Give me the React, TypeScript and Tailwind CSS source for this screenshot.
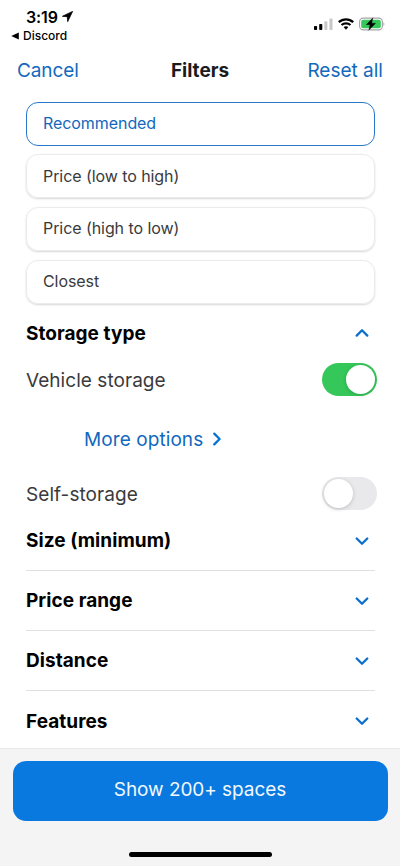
import React, { useState } from "react";

type ChevronProps = { direction: "up" | "down" | "right" };

function Chevron({ direction }: ChevronProps) {
  if (direction === "right") {
    return (
      <svg width="10" height="14" viewBox="0 0 10 14" fill="none">
        <path d="M2.3 1.6L7.6 7L2.3 12.4" stroke="#0873d6" strokeWidth="2.3" strokeLinecap="round" strokeLinejoin="round" />
      </svg>
    );
  }
  return (
    <svg width="14" height="10" viewBox="0 0 14 10" fill="none">
      <path
        d={direction === "up" ? "M1.7 7.6L7 2.3L12.3 7.6" : "M1.7 2.5L7 7.8L12.3 2.5"}
        stroke="#0b6fce"
        strokeWidth="2.3"
        strokeLinecap="round"
        strokeLinejoin="round"
      />
    </svg>
  );
}

function StatusBar() {
  return (
    <div className="flex h-[48px] justify-between pl-[11px] pr-[15px] text-black">
      <div className="flex flex-col pt-[8px]">
        <div className="flex items-center gap-[4px] pl-[15px]">
          <span className="text-[16px] leading-[18px] font-semibold tracking-[-0.1px]">3:19</span>
          <svg width="11" height="11" viewBox="0 0 11 11" className="-mt-[2px]">
            <path d="M10.6 0.4L0.4 5.3L5.3 5.7L5.7 10.6Z" fill="#000" stroke="#000" strokeWidth="0.8" strokeLinejoin="round" />
          </svg>
        </div>
        <div className="mt-[3px] flex items-center gap-[4px]">
          <svg width="8" height="8" viewBox="0 0 8 8">
            <path d="M0.3 4L7.8 0.4V7.6Z" fill="#000" />
          </svg>
          <span className="text-[12px] leading-[14px] font-medium">Discord</span>
        </div>
      </div>
      <div className="mt-[17px] flex h-[14px] items-center gap-[5px]">
        <svg width="19" height="12" viewBox="0 0 19 12">
          <rect x="0" y="8" width="3.1" height="4" rx="0.8" fill="#000" />
          <rect x="5.2" y="6" width="3.1" height="6" rx="0.8" fill="#000" />
          <rect x="10.3" y="3.3" width="3.1" height="8.7" rx="0.8" fill="#c8c8c9" />
          <rect x="15.4" y="0.6" width="3.1" height="11.4" rx="0.8" fill="#c8c8c9" />
        </svg>
        <svg width="16" height="12" viewBox="0 0 16 12" fill="none" stroke="#000">
          <path d="M0.8 4.2C4.8 0.4 11.2 0.4 15.2 4.2" strokeWidth="2.3" />
          <path d="M3.5 7.1C6 4.8 10 4.8 12.5 7.1" strokeWidth="2.1" />
          <path d="M5.6 9.1C7 7.9 9 7.9 10.4 9.1L8 11.7Z" fill="#000" stroke="none" />
        </svg>
        <svg width="26" height="14" viewBox="0 0 26 14">
          <rect x="0.6" y="1.1" width="22.8" height="11.8" rx="3.6" fill="#fff" stroke="#a5a5a7" strokeWidth="1.1" />
          <rect x="2.2" y="2.7" width="19.6" height="8.6" rx="2" fill="#35c759" />
          <path d="M24.4 5.2C25.7 5.7 25.7 8.3 24.4 8.8Z" fill="#a5a5a7" />
          <path d="M13.9 0.8L7.2 7.7H11L9.8 13.3L16.6 6.2H12.7Z" fill="#000" stroke="#000" strokeWidth="0.3" />
        </svg>
      </div>
    </div>
  );
}

function Toggle({ initial }: { initial: boolean }) {
  const [on, setOn] = useState(initial);
  return (
    <button
      role="switch"
      aria-checked={on}
      onClick={() => setOn(!on)}
      className={
        on
          ? "flex h-[33px] w-[55px] items-center justify-end rounded-full bg-[#35c759] p-[2px]"
          : "flex h-[33px] w-[55px] items-center justify-start rounded-full bg-[#e9e9eb] p-[2px]"
      }
    >
      <span className="size-[29px] rounded-full bg-white shadow-[0_1px_4px_rgba(0,0,0,0.18)]" />
    </button>
  );
}

const sorts = ["Recommended", "Price (low to high)", "Price (high to low)", "Closest"];
const sections = ["Size (minimum)", "Price range", "Distance", "Features"];

export default function App() {
  const [sort, setSort] = useState(sorts[0]);
  return (
    <div className="flex h-[866px] w-[400px] flex-col overflow-hidden bg-white font-['Inter',sans-serif]">
      <StatusBar />
      <header className="flex h-[45px] items-center justify-between px-[17px] text-[19px] text-[#1268bd]">
        <button className="w-[100px] pt-[2px] text-left tracking-[-0.1px]">Cancel</button>
        <h1 className="pt-[2px] text-[19px] font-bold text-[#1b1b1d]">Filters</h1>
        <button className="w-[100px] pt-[2px] text-right whitespace-nowrap">Reset all</button>
      </header>

      <main className="flex flex-1 flex-col overflow-hidden px-[26px] pt-[8.6px]">
        <div className="flex flex-col gap-[8.7px]">
          {sorts.map((s) => (
            <button
              key={s}
              onClick={() => setSort(s)}
              className={
                s === sort
                  ? "flex h-[44px] w-[349px] items-center rounded-[12px] border border-[#2878cc] px-[16px] pb-[1px] text-[16px] tracking-[-0.07px] text-[#1268bd]"
                  : "flex h-[44px] w-[349px] items-center rounded-[12px] border border-[#ebebed] px-[16px] pb-[1px] text-[16px] tracking-[-0.07px] text-[#3a3a3c] shadow-[0_1px_2px_rgba(0,0,0,0.16)]"
              }
            >
              {s}
            </button>
          ))}
        </div>

        <div className="mt-[13.3px] flex h-[32px] w-[349px] items-center justify-between pr-[6px]">
          <h2 className="pt-[3px] text-[19px] font-bold tracking-[0.04px] text-black">Storage type</h2>
          <Chevron direction="up" />
        </div>
        <div className="mt-[15px] flex h-[33px] w-[351px] items-center justify-between text-[19px] text-[#3a3a3c]">
          <span className="pt-[2px] tracking-[0.05px]">Vehicle storage</span>
          <Toggle initial={true} />
        </div>
        <button className="mt-[29px] ml-[58px] flex h-[28px] items-center gap-[9px] text-[19px] text-[#1268bd]">
          <span className="pt-[1px] tracking-[0.08px]">More options</span>
          <Chevron direction="right" />
        </button>
        <div className="mt-[24px] flex h-[33px] w-[351px] items-center justify-between text-[19px] text-[#3a3a3c]">
          <span className="pt-[2px] tracking-[0.06px]">Self-storage</span>
          <Toggle initial={false} />
        </div>

        <div className="mt-[0.8px] flex w-[349px] flex-col divide-y divide-[#e0e0e2]">
          {sections.map((s) => (
            <div key={s} className="flex h-[60px] shrink-0 items-center justify-between pr-[6px]">
              <h2 className="pt-[1px] text-[19px] font-bold tracking-[0.05px] text-black">{s}</h2>
              <Chevron direction="down" />
            </div>
          ))}
        </div>
      </main>

      <footer className="flex h-[118px] shrink-0 flex-col items-center border-t border-[#e9e9ea] bg-[#f4f4f4] pt-[12px]">
        <button className="flex h-[60px] w-[375px] items-center justify-center rounded-[13px] bg-[#0979e0] pb-[2px] text-[19px] tracking-[-0.06px] text-[#f2f8ff]">
          Show 200+ spaces
        </button>
        <div className="mt-[31px] h-[5px] w-[143px] rounded-full bg-black" />
      </footer>
    </div>
  );
}
